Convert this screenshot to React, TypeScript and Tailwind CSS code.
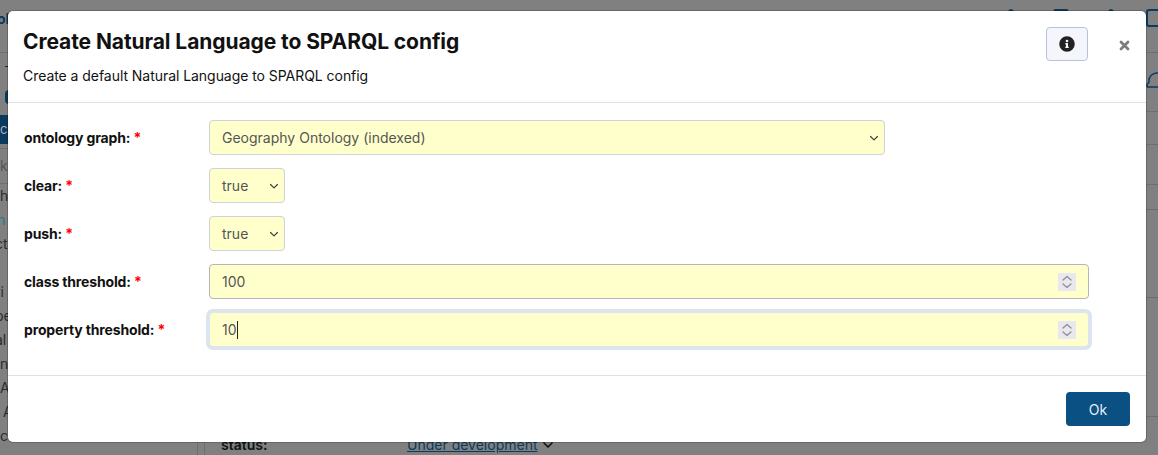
import { ChevronDown } from 'lucide-react'

function Label({ text }: { text: string }) {
  return (
    <label className="w-[185px] shrink-0 text-[14px] font-bold text-[#111] tracking-[-0.15px]">
      {text}: <span className="text-[#f00]">*</span>
    </label>
  )
}

function Select({ value, wide }: { value: string; wide?: boolean }) {
  return (
    <div className={`h-[35px] ${wide ? 'w-[676px]' : 'w-[76px]'} rounded-[4px] border border-[#cfd2d6] bg-[#ffffcc] pl-3 pr-[5px] flex items-center justify-between text-[14px] text-[#555]`}>
      {value}
      <svg width="10" height="10" viewBox="0 0 16 16">
        <path d="M2.5 5.5l5.5 5.5 5.5-5.5" fill="none" stroke="#444" strokeWidth="2" strokeLinecap="round" strokeLinejoin="round" />
      </svg>
    </div>
  )
}

function NumberInput({ value, focused }: { value: string; focused?: boolean }) {
  return (
    <div
      className={`h-[35px] w-[880px] rounded-[4px] border bg-[#ffffcc] pl-3 pr-[12px] flex items-center justify-between text-[14px] text-[#555] ${
        focused ? 'border-[#dce5ee] ring-[3px] ring-[#dce5ee]' : 'border-[#b5b5b5]'
      }`}
    >
      <div className="flex items-center">
        {value}
        {focused && <span className="w-px h-[18px] bg-[#222]" />}
      </div>
      <div className="w-[18px] h-[18px] bg-[#e8e8ee] flex items-center justify-center">
        <svg width="12" height="14" viewBox="0 0 12 14">
          <path d="M2 5l4-3.5L10 5M2 9l4 3.5L10 9" fill="none" stroke="#8f8f97" strokeWidth="1.3" strokeLinecap="round" strokeLinejoin="round" />
        </svg>
      </div>
    </div>
  )
}

function SideRow({ text, indent, clip }: { text?: string; indent?: boolean; clip?: boolean }) {
  return (
    <div className={`h-[24px] leading-[24px] text-[14px] text-[#2b2b2b] ${indent ? 'pl-[3px]' : ''} ${clip ? '-ml-[5px]' : ''}`}>
      {text}
    </div>
  )
}

function Background() {
  return (
    <div className="h-[455px] flex flex-col">
      <header className="h-[53px] shrink-0 border-b border-[#6e6e6e] flex items-start">
        <span className="mt-[8px] -ml-[3px] text-[14px] font-bold text-[#0a3a5c]">ol</span>
        <div className="ml-auto mr-[-12px] pt-[9px] flex gap-[25px]">
          <span className="w-[20px] h-[20px] rounded-full bg-[#0a3a5c] scale-x-50" />
          <span className="w-[30px] h-[20px] rounded-[3px] bg-[#0a3a5c] scale-x-50" />
          <span className="w-[20px] h-[20px] rounded-full bg-[#0a3a5c] scale-x-50" />
          <span className="w-[24px] h-[18px] rounded-[3px] border-2 border-[#0a3a5c]" />
        </div>
      </header>
      <div className="flex-1 flex">
        <aside className="w-[198px] shrink-0 border-r border-[#6e6e6e] flex flex-col">
          <div className="h-[31px] pt-[13px] pl-[5px]">
            <div className="w-[4px] h-px bg-[#222]" />
          </div>
          <div className="h-[31px] pt-[6px] pl-[5px]">
            <div className="w-[8px] h-[14px] rounded-full bg-[#0a3a5c]" />
          </div>
          <div className="h-[29px] bg-[#0a3a5c] leading-[29px] text-[13px] text-[#9fb4c4]">c</div>
          <div className="mt-[4px] h-[36px] border-y border-[#6e6e6e] leading-[34px] text-[14px] text-[#555]">k</div>
          <SideRow text="h" />
          <div className="h-[24px] -ml-[3px] leading-[24px] text-[14px] text-[#1f7a8c]">n</div>
          <SideRow text="ct" clip />
          <SideRow />
          <SideRow text="ri" clip />
          <SideRow text="pe" clip />
          <SideRow text="al" clip />
          <SideRow text="n" />
          <SideRow text="A" />
          <SideRow text="A" indent />
          <SideRow text="c" />
        </aside>
        <main className="ml-[6px] flex-1 border-l border-[#6e6e6e] flex flex-col">
          <div className="h-[59px] border-b border-[#6e6e6e] flex justify-end pt-[16px]">
            <svg width="12" height="20" viewBox="0 0 12 20">
              <path d="M1 18a6 6 0 0 1 2-5a8 8 0 0 1 9-9M1 18h11" fill="none" stroke="#0a3a5c" strokeWidth="1.5" />
            </svg>
          </div>
          <div className="h-[33px] border-b border-[#6e6e6e]" />
          <div className="h-[40px] border-b border-[#6e6e6e]" />
          <div className="h-[25px] border-b border-[#6e6e6e]" />
          <div className="h-[88px] border-b border-[#6e6e6e]" />
          <div className="h-[119px] border-b border-[#6e6e6e]" />
          <div className="pl-[16px] pt-[18px] flex items-center text-[14px] leading-[20px]">
            <span className="w-[186px] font-semibold text-[#111]">status:</span>
            <span className="underline text-[#0a3a5c]">Under development</span>
            <ChevronDown size={16} strokeWidth={2.5} className="ml-[3px] text-[#111]" />
          </div>
        </main>
      </div>
    </div>
  )
}

export default function App() {
  return (
    <div className="relative w-[1158px] h-[455px] overflow-hidden bg-[#808080] font-['Inter',sans-serif]">
      <Background />

      {/* dialog */}
      <div className="absolute left-[8px] top-[11px] w-[1138px] h-[431px] rounded-[5px] bg-white flex flex-col shadow-[0_0_0_1px_rgba(0,0,0,0.2)]">
        <div className="h-[92px] shrink-0 border-b border-[#dee2e6] pl-[15px] pr-[16px] pt-[16px] flex items-start justify-between">
          <div className="pt-[2px]">
            <h1 className="text-[21px] leading-[26px] font-bold text-[#111] tracking-[-0.08px]">Create Natural Language to SPARQL config</h1>
            <p className="mt-[11px] text-[14px] leading-[20px] text-[#111] tracking-[-0.05px]">Create a default Natural Language to SPARQL config</p>
          </div>
          <div className="flex items-start">
            <button className="w-[42px] h-[34px] rounded-[4px] border border-[#b6c2dc] bg-[#f4f6fb] flex items-center justify-center">
              <svg width="16" height="16" viewBox="0 0 512 512">
                <path
                  fill="#222"
                  d="M256 8a248 248 0 100 496 248 248 0 000-496zm0 110a42 42 0 110 84 42 42 0 010-84zm56 254a12 12 0 01-12 12h-88a12 12 0 01-12-12v-24a12 12 0 0112-12h12v-64h-12a12 12 0 01-12-12v-24a12 12 0 0112-12h64a12 12 0 0112 12v100h12a12 12 0 0112 12v24z"
                />
              </svg>
            </button>
            <svg className="ml-[31px] mt-[13px]" width="11" height="11" viewBox="0 0 11 11">
              <path d="M2 2l7 7M9 2l-7 7" stroke="#7d7d7d" strokeWidth="2.8" strokeLinecap="round" />
            </svg>
          </div>
        </div>

        <div className="flex-1 px-[16px] pt-[17px] flex flex-col gap-[13px]">
          <div className="flex items-center"><Label text="ontology graph" /><Select wide value="Geography Ontology (indexed)" /></div>
          <div className="flex items-center"><Label text="clear" /><Select value="true" /></div>
          <div className="flex items-center"><Label text="push" /><Select value="true" /></div>
          <div className="flex items-center"><Label text="class threshold" /><NumberInput value="100" /></div>
          <div className="flex items-center"><Label text="property threshold" /><NumberInput value="10" focused /></div>
        </div>

        <div className="h-[67px] shrink-0 border-t border-[#e0e0e0] flex items-center justify-end pr-[16px]">
          <button className="w-[64px] h-[34px] rounded-[4px] bg-[#0a5082] text-[#e6eef5] text-[14px]">Ok</button>
        </div>
      </div>
    </div>
  )
}
